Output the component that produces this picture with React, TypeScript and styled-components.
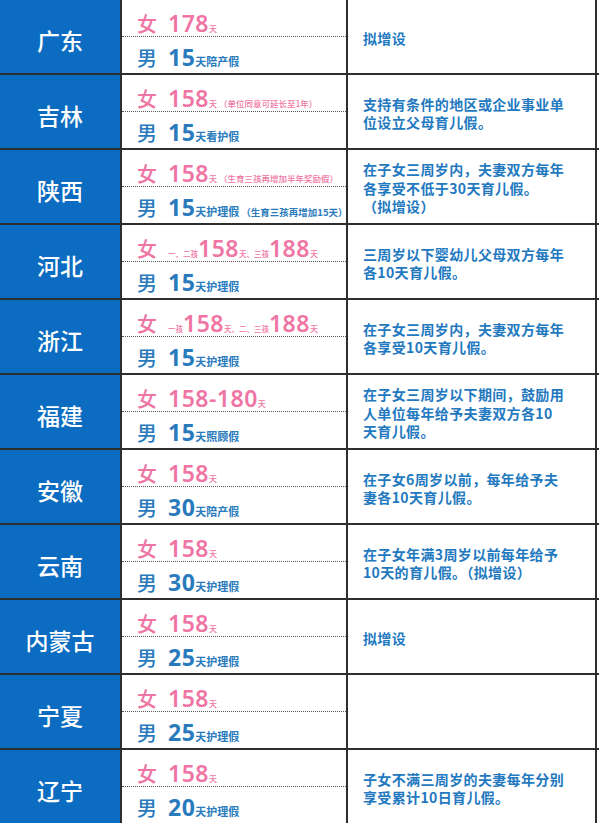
import React from 'react';
import styled, { createGlobalStyle } from 'styled-components';

const GlobalStyle = createGlobalStyle`
  html, body {
    margin: 0;
    padding: 0;
    background: #fff;
    overflow: hidden;
  }
  body {
    font-family: "Noto Sans CJK SC", "Noto Sans", sans-serif;
  }
`;

type SegKind = 'num' | 'unit' | 'tiny' | 'note' | 'label' | 'extra';
type Seg = { t: string; k: SegKind };

type Province = {
  name: string;
  female: Seg[];
  male: Seg[];
  note: string[];
};

const n = (t: string): Seg => ({ t, k: 'num' });
const u = (t: string): Seg => ({ t, k: 'unit' });
const tiny = (t: string): Seg => ({ t, k: 'tiny' });
const note = (t: string): Seg => ({ t, k: 'note' });
const label = (t: string): Seg => ({ t, k: 'label' });
const extra = (t: string): Seg => ({ t, k: 'extra' });

const provinces: Province[] = [
  {
    name: '广东',
    female: [n('178'), u('天')],
    male: [n('15'), label('天陪产假')],
    note: ['拟增设'],
  },
  {
    name: '吉林',
    female: [n('158'), u('天'), note('（单位同意可延长至1年）')],
    male: [n('15'), label('天看护假')],
    note: ['支持有条件的地区或企业事业单', '位设立父母育儿假。'],
  },
  {
    name: '陕西',
    female: [n('158'), u('天'), note('（生育三孩再增加半年奖励假）')],
    male: [n('15'), label('天护理假'), extra('（生育三孩再增加15天）')],
    note: ['在子女三周岁内，夫妻双方每年', '各享受不低于30天育儿假。', '（拟增设）'],
  },
  {
    name: '河北',
    female: [tiny('一、二孩'), n('158'), tiny('天、三孩'), n('188'), u('天')],
    male: [n('15'), label('天护理假')],
    note: ['三周岁以下婴幼儿父母双方每年', '各10天育儿假。'],
  },
  {
    name: '浙江',
    female: [tiny('一孩'), n('158'), tiny('天、二、三孩'), n('188'), u('天')],
    male: [n('15'), label('天护理假')],
    note: ['在子女三周岁内，夫妻双方每年', '各享受10天育儿假。'],
  },
  {
    name: '福建',
    female: [n('158-180'), u('天')],
    male: [n('15'), label('天照顾假')],
    note: ['在子女三周岁以下期间，鼓励用', '人单位每年给予夫妻双方各10', '天育儿假。'],
  },
  {
    name: '安徽',
    female: [n('158'), u('天')],
    male: [n('30'), label('天陪产假')],
    note: ['在子女6周岁以前，每年给予夫', '妻各10天育儿假。'],
  },
  {
    name: '云南',
    female: [n('158'), u('天')],
    male: [n('30'), label('天护理假')],
    note: ['在子女年满3周岁以前每年给予', '10天的育儿假。（拟增设）'],
  },
  {
    name: '内蒙古',
    female: [n('158'), u('天')],
    male: [n('25'), label('天护理假')],
    note: ['拟增设'],
  },
  {
    name: '宁夏',
    female: [n('158'), u('天')],
    male: [n('25'), label('天护理假')],
    note: [],
  },
  {
    name: '辽宁',
    female: [n('158'), u('天')],
    male: [n('20'), label('天护理假')],
    note: ['子女不满三周岁的夫妻每年分别', '享受累计10日育儿假。'],
  },
];

const Table = styled.div`
  width: 599px;
  margin-top: -2px;
`;

const Row = styled.div`
  display: flex;
  height: 75px;
  box-sizing: border-box;
  border-top: 2px solid #2e2e2e;
`;

const NameCell = styled.div`
  width: 120px;
  flex: none;
  background: #0b6cc1;
  border-right: 2px solid #2e2e2e;
  color: #fff;
  font-size: 23px;
  font-weight: 500;
  display: flex;
  align-items: center;
  justify-content: center;
  padding-top: 7px;
  box-sizing: content-box;
`;

const LeaveCell = styled.div`
  width: 224px;
  flex: none;
  border-right: 2px solid #2e2e2e;
  display: flex;
  flex-direction: column;
`;

const Band = styled.div<{ $top?: boolean }>`
  height: ${(p) => (p.$top ? '37px' : 'auto')};
  flex: ${(p) => (p.$top ? 'none' : '1')};
  border-bottom: ${(p) => (p.$top ? '1px dotted #555' : 'none')};
  display: flex;
  align-items: flex-end;
  padding: 0 0 ${(p) => (p.$top ? '0' : '3px')} 15px;
  box-sizing: border-box;
`;

const Line = styled.div`
  display: flex;
  align-items: baseline;
  white-space: nowrap;
  line-height: 1.15;
`;

const Sex = styled.span<{ $female?: boolean }>`
  font-size: 20px;
  font-weight: 500;
  color: ${(p) => (p.$female ? '#ef75a4' : '#2a7bbd')};
  margin-right: 11px;
`;

const SegText = styled.span<{ $kind: SegKind; $female?: boolean }>`
  color: ${(p) => (p.$female ? '#ef75a4' : '#2a7bbd')};
  font-family: ${(p) =>
    p.$kind === 'num'
      ? '"Noto Sans", "Noto Sans CJK SC", sans-serif'
      : '"Noto Sans CJK SC", sans-serif'};
  font-size: ${(p) =>
    ({ num: '23px', unit: '8px', tiny: '7.5px', note: '8.5px', label: '11px', extra: '9.5px' }[
      p.$kind
    ])};
  font-weight: ${(p) => (p.$kind === 'num' ? (p.$female ? 600 : 700) : p.$female ? 500 : 700)};
  letter-spacing: ${(p) => (p.$kind === 'num' ? '0.5px' : '0')};
  margin-left: ${(p) => (p.$kind === 'note' || p.$kind === 'extra' ? '2px' : '0')};
`;

const NoteCell = styled.div`
  width: 249px;
  flex: none;
  border-right: 2px solid #2e2e2e;
  display: flex;
  flex-direction: column;
  justify-content: center;
  padding: 3px 0 0 15px;
  box-sizing: border-box;
  color: #2379bf;
  font-size: 14px;
  font-weight: 700;
  line-height: 18.5px;
  letter-spacing: 0.36px;
  white-space: nowrap;
`;

const Segments = ({ segs, female }: { segs: Seg[]; female?: boolean }) => (
  <>
    {segs.map((s, i) => (
      <SegText key={i} $kind={s.k} $female={female}>
        {s.t}
      </SegText>
    ))}
  </>
);

export default function App() {
  return (
    <>
      <GlobalStyle />
      <Table>
        {provinces.map((p) => (
          <Row key={p.name}>
            <NameCell>{p.name}</NameCell>
            <LeaveCell>
              <Band $top>
                <Line>
                  <Sex $female>女</Sex>
                  <Segments segs={p.female} female />
                </Line>
              </Band>
              <Band>
                <Line>
                  <Sex>男</Sex>
                  <Segments segs={p.male} />
                </Line>
              </Band>
            </LeaveCell>
            <NoteCell>
              {p.note.map((line, i) => (
                <div key={i}>{line}</div>
              ))}
            </NoteCell>
          </Row>
        ))}
      </Table>
    </>
  );
}
